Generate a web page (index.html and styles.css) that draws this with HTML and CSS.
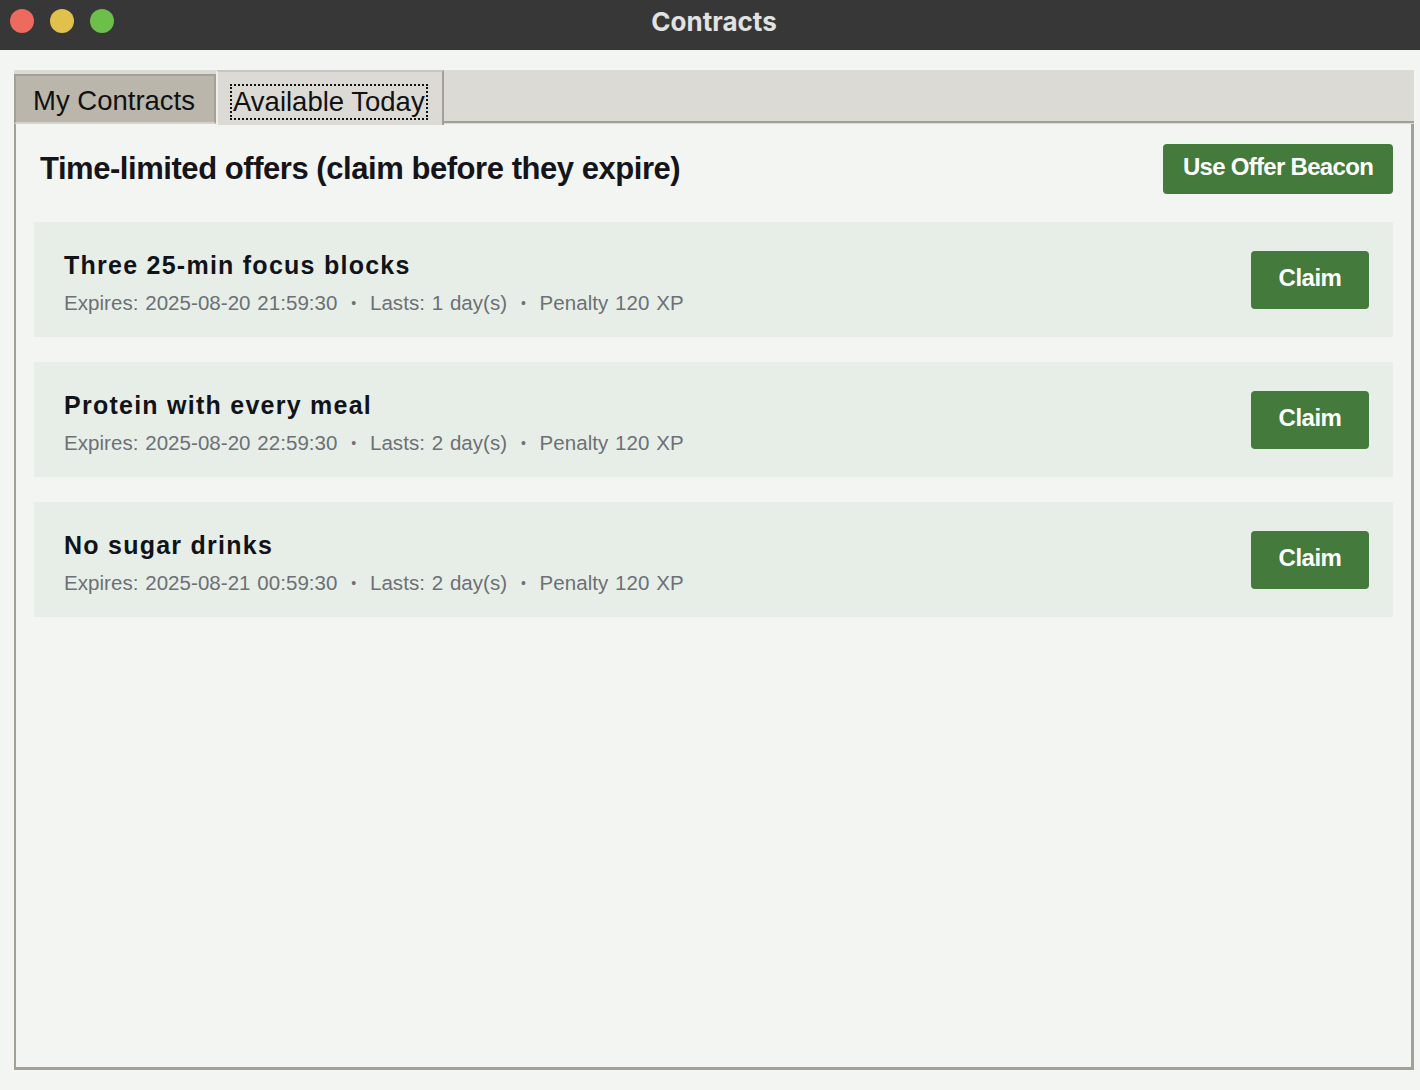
FILE: index.html
```html
<!DOCTYPE html>
<html>
<head>
<meta charset="utf-8">
<link rel="stylesheet" href="styles.css">
</head>
<body>
<div class="titlebar">
  <div class="lights">
    <span class="light red"></span>
    <span class="light yellow"></span>
    <span class="light green"></span>
  </div>
  <div class="wtitle">Contracts</div>
</div>
<div class="window">
  <div class="notebook">
    <div class="tabs">
      <div class="tab">My Contracts</div>
      <div class="tab selected"><span class="focus">Available Today</span></div>
      <div class="tabfill"></div>
    </div>
    <div class="pane">
      <div class="header">
        <h1 class="heading">Time-limited offers (claim before they expire)</h1>
        <button class="btn beacon">Use Offer Beacon</button>
      </div>
      <div class="cards">
        <div class="card">
          <div class="info">
            <div class="ctitle">Three 25-min focus blocks</div>
            <div class="meta">Expires: 2025-08-20 21:59:30 <span class="dot">•</span> Lasts: 1 day(s) <span class="dot">•</span> Penalty 120 XP</div>
          </div>
          <button class="btn claim">Claim</button>
        </div>
        <div class="card">
          <div class="info">
            <div class="ctitle">Protein with every meal</div>
            <div class="meta">Expires: 2025-08-20 22:59:30 <span class="dot">•</span> Lasts: 2 day(s) <span class="dot">•</span> Penalty 120 XP</div>
          </div>
          <button class="btn claim">Claim</button>
        </div>
        <div class="card">
          <div class="info">
            <div class="ctitle">No sugar drinks</div>
            <div class="meta">Expires: 2025-08-21 00:59:30 <span class="dot">•</span> Lasts: 2 day(s) <span class="dot">•</span> Penalty 120 XP</div>
          </div>
          <button class="btn claim">Claim</button>
        </div>
      </div>
    </div>
  </div>
</div>
</body>
</html>
```

FILE: styles.css
```css
* { box-sizing: border-box; }
html, body {
  margin: 0;
  padding: 0;
  width: 1420px;
  height: 1090px;
  overflow: hidden;
  background: #f3f5f2;
  font-family: "Liberation Sans", Arial, sans-serif;
}
.titlebar {
  height: 50px;
  background: #373737;
  position: relative;
  display: flex;
  align-items: center;
  justify-content: center;
  padding-left: 8px;
}
.lights {
  position: absolute;
  left: 10px;
  top: 9px;
  display: flex;
  gap: 16px;
}
.light {
  width: 24px;
  height: 24px;
  border-radius: 50%;
  display: block;
}
.red { background: #ec6a5e; }
.yellow { background: #e1c04c; }
.green { background: #6cc04a; }
.wtitle {
  color: #e2e2e2;
  font-family: Inter, "Liberation Sans", sans-serif;
  font-weight: 700;
  font-size: 26px;
  margin-top: -8px;
}
.window {
  padding: 20px 6px 0 14px;
  height: 1040px;
}
.notebook {
  display: flex;
  flex-direction: column;
  height: 1000px;
}
.tabs {
  display: flex;
  align-items: flex-end;
  height: 54px;
  background: #dcdad5;
  position: relative;
  z-index: 1;
}
.tab {
  height: 50px;
  width: 202px;
  background: #bab6ab;
  border-top: 2px solid #a3a097;
  border-left: 2px solid #a3a097;
  border-right: 2px solid #a3a097;
  border-bottom: 2px solid #d6d3cc;
  font-size: 27.5px;
  color: #111;
  display: flex;
  align-items: center;
  padding-left: 17px;
  padding-top: 4px;
  white-space: nowrap;
}
.tab.selected {
  height: 55px;
  width: 228px;
  margin-bottom: -1px;
  background: #dcdad5;
  border-top: 2px solid #c9c6bf;
  border-left: 2px solid #f0efec;
  border-right: 2px solid #a3a097;
  border-bottom: none;
  padding-left: 12px;
  padding-top: 6px;
}
.focus {
  border: 2px dotted #111;
  padding: 0 1px;
  line-height: 32px;
}
.tabfill {
  flex: 1;
  height: 2px;
  background: #a3a097;
  margin-bottom: 1px;
}
.pane {
  flex: 1;
  border-left: 2px solid #a3a097;
  border-right: 3px solid #a3a097;
  border-bottom: 3px solid #a3a097;
  width: 1400px;
  padding: 19px 18px 0 18px;
  display: flex;
  flex-direction: column;
}
.header {
  display: flex;
  justify-content: space-between;
  align-items: center;
  height: 51px;
}
.heading {
  margin: 0 0 0 6px;
  font-size: 31px;
  font-weight: 700;
  letter-spacing: -0.45px;
  color: #14141a;
  font-family: "Liberation Sans", Arial, sans-serif;
}
.btn {
  background: #447a3c;
  color: #fff;
  border: none;
  border-radius: 4px;
  font-family: "Liberation Sans", Arial, sans-serif;
  font-weight: 700;
  letter-spacing: -0.5px;
  cursor: pointer;
}
.beacon {
  width: 230px;
  height: 50px;
  font-size: 24px;
  letter-spacing: -0.7px;
  padding: 0;
  padding-bottom: 3px;
}
.cards {
  margin-top: 28px;
  display: flex;
  flex-direction: column;
  gap: 25px;
}
.card {
  background: #e7eee8;
  height: 115px;
  display: flex;
  align-items: center;
  justify-content: space-between;
  padding: 0 24px 0 30px;
}
.info {
  padding-top: 6px;
}
.ctitle {
  font-size: 25px;
  font-weight: 700;
  color: #111318;
  letter-spacing: 1.25px;
  margin-bottom: 11px;
}
.meta {
  font-size: 20.5px;
  color: #6d7075;
  letter-spacing: 0.05px;
  word-spacing: 1px;
}
.dot {
  margin: 0 7px;
  font-size: 14px;
  vertical-align: 2px;
}
.claim {
  width: 118px;
  height: 58px;
  font-size: 24px;
  padding: 0 0 3px 0;
}
```
